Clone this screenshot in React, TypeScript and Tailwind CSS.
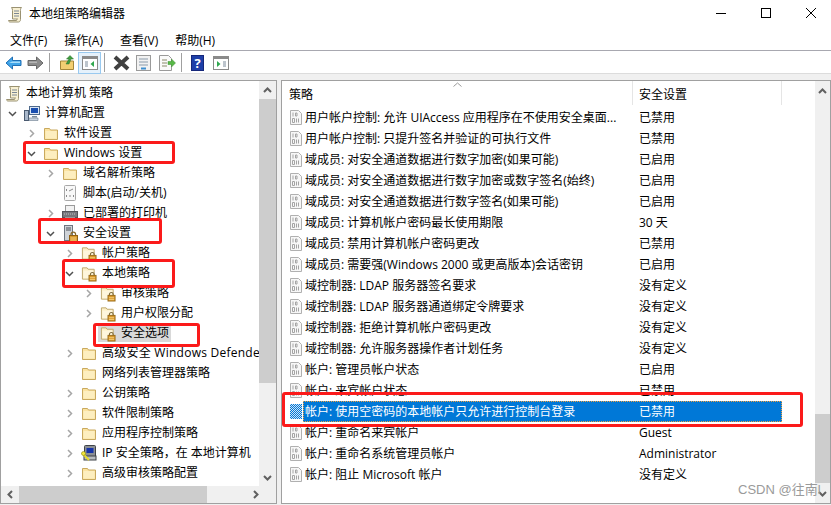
import React from "react";

type TreeIcon = "scroll" | "computer" | "folder" | "lockFolder" | "script" | "printer" | "safe" | "ip";

interface TreeItem {
  label: string;
  level: number;
  chevron?: "open" | "closed";
  icon: TreeIcon;
  selected?: boolean;
  wide?: boolean;
}

const treeItems: TreeItem[] = [
  { label: "本地计算机 策略", level: 0, icon: "scroll" },
  { label: "计算机配置", level: 1, chevron: "open", icon: "computer" },
  { label: "软件设置", level: 2, chevron: "closed", icon: "folder" },
  { label: "Windows 设置", level: 2, chevron: "open", icon: "folder" },
  { label: "域名解析策略", level: 3, chevron: "closed", icon: "folder" },
  { label: "脚本(启动/关机)", level: 3, icon: "script" },
  { label: "已部署的打印机", level: 3, chevron: "closed", icon: "printer" },
  { label: "安全设置", level: 3, chevron: "open", icon: "safe" },
  { label: "帐户策略", level: 4, chevron: "closed", icon: "lockFolder" },
  { label: "本地策略", level: 4, chevron: "open", icon: "lockFolder" },
  { label: "审核策略", level: 5, chevron: "closed", icon: "lockFolder" },
  { label: "用户权限分配", level: 5, chevron: "closed", icon: "lockFolder" },
  { label: "安全选项", level: 5, icon: "lockFolder", selected: true },
  { label: "高级安全 Windows Defende", level: 4, chevron: "closed", icon: "folder", wide: true },
  { label: "网络列表管理器策略", level: 4, icon: "folder" },
  { label: "公钥策略", level: 4, chevron: "closed", icon: "folder" },
  { label: "软件限制策略", level: 4, chevron: "closed", icon: "folder" },
  { label: "应用程序控制策略", level: 4, chevron: "closed", icon: "folder" },
  { label: "IP 安全策略，在 本地计算机", level: 4, chevron: "closed", icon: "ip" },
  { label: "高级审核策略配置", level: 4, chevron: "closed", icon: "folder" },
];

const policyRows: [string, string][] = [
  ["用户帐户控制: 允许 UIAccess 应用程序在不使用安全桌面...", "已禁用"],
  ["用户帐户控制: 只提升签名并验证的可执行文件", "已禁用"],
  ["域成员: 对安全通道数据进行数字加密(如果可能)", "已启用"],
  ["域成员: 对安全通道数据进行数字加密或数字签名(始终)", "已启用"],
  ["域成员: 对安全通道数据进行数字签名(如果可能)", "已启用"],
  ["域成员: 计算机帐户密码最长使用期限", "30 天"],
  ["域成员: 禁用计算机帐户密码更改", "已禁用"],
  ["域成员: 需要强(Windows 2000 或更高版本)会话密钥", "已启用"],
  ["域控制器: LDAP 服务器签名要求", "没有定义"],
  ["域控制器: LDAP 服务器通道绑定令牌要求", "没有定义"],
  ["域控制器: 拒绝计算机帐户密码更改", "没有定义"],
  ["域控制器: 允许服务器操作者计划任务", "没有定义"],
  ["帐户: 管理员帐户状态", "已启用"],
  ["帐户: 来宾帐户状态", "已禁用"],
  ["帐户: 使用空密码的本地帐户只允许进行控制台登录", "已禁用"],
  ["帐户: 重命名来宾帐户", "Guest"],
  ["帐户: 重命名系统管理员帐户", "Administrator"],
  ["帐户: 阻止 Microsoft 帐户", "没有定义"],
];

const Folder = () => (
  <svg width="16" height="15" viewBox="0 0 16 15">
    <path d="M1.500 13.500V2.500h5l1 1.500h7v9.500z" fill="#fbe3a1" stroke="#c9a95e" />
    <path d="M2.500 12.500V5h11v7.500z" fill="#fdeebf" />
  </svg>
);

const LockFolder = () => (
  <svg width="17" height="17" viewBox="0 0 17 17">
    <path d="M1.500 14.500V2.500h5l1 1.500h6.500v10.500z" fill="#fdf0c8" stroke="#bda56a" />
    <path d="M2.500 13.500V5.500h10.500v8z" fill="#fef6dc" />
    <path d="M10 11V9.500a2 2 0 0 1 4 0V11" fill="none" stroke="#7d6a3c" strokeWidth="1.200" />
    <rect x="8.500" y="10.500" width="7.500" height="6" fill="#d9992a" stroke="#9a6c1a" />
    <path d="M9.500 13h5.500M9.500 15h5.500" stroke="#f3cf7f" />
  </svg>
);

const Scroll = ({ size = 15 }: { size?: number }) => (
  <svg width={size} height={size + 2} viewBox="0 0 15 17">
    <path d="M3.500 1.500h10c-1 1-1 2-1 3v9c0 1.500-1 2.500-2 2.500H2c-1 0-1.500-.8-1.500-1.500h8c0-1 .5-1.500 1-1.500H4.500V4.500c0-1-.2-2-1-3z" fill="#f8f0d2" stroke="#9a9272" />
    <path d="M6 5h5M6 7.500h5M6 10h5" stroke="#7b8794" />
  </svg>
);

const Computer = () => (
  <svg width="16" height="16" viewBox="0 0 16 16">
    <rect x="5.500" y="1.500" width="10" height="8" fill="#dbe6f3" stroke="#4f6a8c" />
    <rect x="7" y="3" width="7" height="5" fill="#1a4fb0" />
    <path d="M8 11h5v1.500H8z" fill="#7a8a9c" />
    <rect x="0.500" y="5.500" width="4" height="10" fill="#a9b8cb" stroke="#4a5a70" />
    <path d="M5 13h9v2.500H5z" fill="#c9d3df" stroke="#6a7a8c" strokeWidth=".6" />
  </svg>
);

const ScriptIcon = () => (
  <svg width="14" height="16" viewBox="0 0 14 16">
    <rect x="1.500" y="0.500" width="11" height="15" rx="1" fill="#f8f8f8" stroke="#a8a8a8" />
    <path d="M4 4l-1 1 1 1M6 6l4-2M4 10l-1 1 1 1M10 10l1 1-1 1M6 11h2" stroke="#8a8a8a" fill="none" />
  </svg>
);

const Printer = () => (
  <svg width="16" height="16" viewBox="0 0 16 16">
    <rect x="3.500" y="0.500" width="9" height="6" fill="#f2f2f2" stroke="#9a9a9a" />
    <rect x="0.500" y="6.500" width="15" height="6" fill="#77777c" stroke="#55555a" />
    <path d="M2 9h12" stroke="#c4c4c4" strokeDasharray="1 1" />
    <rect x="3.500" y="12.500" width="9" height="3" fill="#e6e6e6" stroke="#9a9a9a" />
  </svg>
);

const SafeIcon = () => (
  <svg width="15" height="17" viewBox="0 0 15 17">
    <rect x="1.500" y="0.500" width="8" height="15" fill="#cfd3d8" stroke="#6e7680" />
    <path d="M3 3h5M3 5h5" stroke="#4a5058" />
    <path d="M8 11V9.500a2.300 2.300 0 0 1 4.600 0V11" fill="none" stroke="#8a6a2a" strokeWidth="1.200" />
    <rect x="6.500" y="10.500" width="8" height="6" fill="#d9992a" stroke="#8f6214" />
    <path d="M7.500 13h6M7.500 15h6" stroke="#f3cf7f" />
  </svg>
);

const IpIcon = () => (
  <svg width="16" height="17" viewBox="0 0 16 17">
    <rect x="3.500" y="0.500" width="11" height="13" rx="1" fill="#8b8f94" stroke="#3f4347" />
    <rect x="5.500" y="3" width="7" height="5" fill="#1533a8" />
    <rect x="3" y="11" width="12" height="4" fill="#b8bcc0" stroke="#3f4347" />
    <path d="M1 8l7 7" stroke="#e8dc2a" strokeWidth="2" />
    <circle cx="2.500" cy="8.500" r="2" fill="#f2e63a" stroke="#8c8412" strokeWidth=".6" />
  </svg>
);

const treeIcon = (icon: TreeIcon) => {
  switch (icon) {
    case "scroll":
      return <Scroll />;
    case "computer":
      return <Computer />;
    case "lockFolder":
      return <LockFolder />;
    case "script":
      return <ScriptIcon />;
    case "printer":
      return <Printer />;
    case "safe":
      return <SafeIcon />;
    case "ip":
      return <IpIcon />;
    default:
      return <Folder />;
  }
};

const Chevron = ({ dir }: { dir: "open" | "closed" }) => (
  <svg width="9" height="9" viewBox="0 0 9 9" fill="none">
    {dir === "open" ? (
      <path d="M1 3l3.500 3.500L8 3" stroke="#505050" strokeWidth="1.500" />
    ) : (
      <path d="M3 1l3.500 3.500L3 8" stroke="#a6a6a6" strokeWidth="1.500" />
    )}
  </svg>
);

// grey sheet with a folded corner and faint 1/0 marks
const PolicyIcon = ({ active }: { active?: boolean }) => (
  <svg width="14" height="15" viewBox="0 0 14 15" className="shrink-0">
    {active ? (
      <>
        <defs>
          <pattern id="chk" width="2" height="2" patternUnits="userSpaceOnUse">
            <rect width="2" height="2" fill="#cfe3f5" />
            <rect width="1" height="1" fill="#0078d7" />
            <rect x="1" y="1" width="1" height="1" fill="#0078d7" />
          </pattern>
        </defs>
        <rect x="1" y="0" width="12" height="15" fill="url(#chk)" />
      </>
    ) : (
      <>
        <path d="M1.500.500h8l3 3v11h-11z" fill="#f7f7f7" stroke="#b0b0b0" />
        <path d="M4 2.500v4M6.500 3h1.500v3H6.500zM3.500 8.500h2v4h-2zM7.500 8.500v4M9.500 8.500v4" fill="none" stroke="#a4a4a4" />
      </>
    )}
  </svg>
);

const Sep = () => <div className="w-px h-[19px] bg-[#a0a0a0]" />;

const ScrollArrow = ({ dir }: { dir: "up" | "down" | "left" | "right" }) => {
  const d = {
    up: "M1 6l3.500-3.500L8 6",
    down: "M1 3l3.500 3.500L8 3",
    left: "M6 1L2.500 4.500 6 8",
    right: "M3 1l3.500 3.500L3 8",
  }[dir];
  return (
    <svg width="9" height="9" viewBox="0 0 9 9" fill="none">
      <path d={d} stroke="#606060" strokeWidth="2" />
    </svg>
  );
};

const RedBox = ({ className }: { className: string }) => (
  <div className={`absolute border-[3px] border-[#fb1a1a] rounded-[3px] pointer-events-none ${className}`} />
);

export default function App() {
  return (
    <div
      className="relative w-[831px] h-[505px] bg-white text-[12px] text-black overflow-hidden flex flex-col"
      style={{ fontFamily: '"Open Sans", "Noto Sans CJK SC", sans-serif' }}
    >
      {/* title bar */}
      <div className="h-[26px] flex items-center shrink-0 pl-[8px] pt-[2px]">
        <Scroll />
        <span className="ml-[6px]">本地组策略编辑器</span>
        <div className="ml-auto flex items-center mr-[15px] gap-[35px] -mt-[2px]">
          <div className="w-[10px] h-px bg-black" />
          <div className="w-[10px] h-[10px] border border-black" />
          <svg width="10" height="10" viewBox="0 0 10 10">
            <path d="M0 0l10 10M10 0L0 10" stroke="#000" strokeWidth="1" />
          </svg>
        </div>
      </div>

      {/* menu */}
      <div className="h-[25px] flex items-center shrink-0 pl-[10px] gap-[17px] border-b border-[#a8a8b0] pt-[5px]">
        <span>文件(F)</span>
        <span>操作(A)</span>
        <span>查看(V)</span>
        <span>帮助(H)</span>
      </div>

      {/* toolbar */}
      <div className="h-[23px] flex items-center shrink-0 pl-[5px] border-b border-[#dcdcdc] pt-[1px]">
        <svg width="17" height="14" viewBox="0 0 17 14">
          <path d="M7.500 1L1 7l6.500 6V9.500h8.500v-5H7.500z" fill="#3fa4e8" stroke="#1f6fb5" />
          <path d="M7 5.500h8V7H4z" fill="#a6dcfa" />
        </svg>
        <svg className="ml-[5px]" width="17" height="14" viewBox="0 0 17 14">
          <path d="M9.500 1L16 7l-6.500 6V9.500H1v-5h8.500z" fill="#8c8c8c" stroke="#666666" />
          <path d="M2 5.500h8V7H2z" fill="#b5b5b5" />
        </svg>
        <div className="ml-[5px]"><Sep /></div>
        <svg className="ml-[9px]" width="16" height="16" viewBox="0 0 16 16">
          <path d="M1.500 14.500V6h13v8.500z" fill="#f3cf72" stroke="#a5873a" />
          <path d="M7 9l3-5H7.500L11 .500 14.500 4H12l-2 5z" fill="#3f9e3f" stroke="#2a6f2a" strokeWidth=".5" />
        </svg>
        <div className="ml-[3px] w-[23px] h-[22px] bg-[#e5f1fb] border border-[#99c9ef] flex items-center justify-center">
          <svg width="16" height="14" viewBox="0 0 16 14">
            <rect x="0.500" y="0.500" width="15" height="13" fill="#fff" stroke="#8a8a8a" />
            <rect x="1" y="1" width="14" height="2" fill="#8a8a8a" />
            <path d="M3 6h3M3 8h3M3 10h3" stroke="#7a8a9a" />
            <path d="M12 5v6L8.500 8z" fill="#2fa84f" />
          </svg>
        </div>
        <div className="ml-[3px]"><Sep /></div>
        <svg className="ml-[8px]" width="17" height="16" viewBox="0 0 17 16">
          <path d="M2 2l13 12M15 2L2 14" stroke="#404040" strokeWidth="4" />
        </svg>
        <svg className="ml-[6px]" width="15" height="16" viewBox="0 0 15 16">
          <rect x="0.500" y="0.500" width="14" height="15" fill="#f2f2f2" stroke="#9a9a9a" />
          <path d="M3 4h9M3 7h9M3 10h9" stroke="#8a9aaa" />
          <rect x="5" y="12.500" width="5" height="2" fill="#3f8fd0" />
        </svg>
        <svg className="ml-[8px]" width="17" height="16" viewBox="0 0 17 16">
          <path d="M.500.500h9l3 3v12H.500z" fill="#fafafa" stroke="#9a9a9a" />
          <path d="M3 5h5M3 8h5M3 11h5" stroke="#8a8a6a" />
          <path d="M9 6.500h3.500V4l4 4-4 4V9.500H9z" fill="#58b947" stroke="#3d8f30" strokeWidth=".5" />
        </svg>
        <div className="ml-[5px]"><Sep /></div>
        <div className="ml-[9px] w-[13px] h-[16px] bg-[#1e3fa8] border border-[#15277a] text-white text-[13px] font-bold leading-[15px] text-center">?</div>
        <svg className="ml-[9px]" width="16" height="14" viewBox="0 0 16 14">
          <rect x="0.500" y="0.500" width="15" height="13" fill="#fff" stroke="#8a8a8a" />
          <rect x="1" y="1" width="14" height="2" fill="#8a8a8a" />
          <path d="M10 6h3M10 8h3M10 10h3" stroke="#7a8a9a" />
          <path d="M4 5v6l3.500-3z" fill="#2fa84f" />
        </svg>
      </div>

      {/* panes */}
      <div className="flex-1 min-h-0 bg-[#f0f0f0] pt-[6px] flex gap-[4px] pb-[1px]">
        {/* tree */}
        <div className="w-[277px] border border-[#a0a0a0] bg-white flex flex-col min-h-0">
          <div className="flex-1 flex min-h-0">
            <div className="flex-1 min-w-0 overflow-hidden pt-[2px]">
              {treeItems.map((item) => (
                <div
                  key={item.label}
                  className="h-[20px] flex items-center whitespace-nowrap"
                  style={{ paddingLeft: item.level === 0 ? 4 : 4 + (item.level - 1) * 19 }}
                >
                  {item.level > 0 && (
                    <div className="w-[19px] shrink-0 flex items-center pl-[3px]">
                      {item.chevron && <Chevron dir={item.chevron} />}
                    </div>
                  )}
                  <div
                    className={`flex items-center ${
                      item.selected ? "bg-[#d9d9d9] h-[18px] -ml-[2px] px-[2px]" : ""
                    }`}
                  >
                    <div className="w-[16px] shrink-0 flex justify-center">{treeIcon(item.icon)}</div>
                    <span className={`ml-[5px] ${item.wide ? "tracking-[0.25px]" : ""}`}>{item.label}</span>
                  </div>
                </div>
              ))}
            </div>
            <div className="w-[17px] shrink-0 bg-[#f0f0f0] flex flex-col items-center">
              <div className="h-[18px] flex items-center justify-center"><ScrollArrow dir="up" /></div>
              <div className="w-full h-[284px] bg-[#cdcdcd]" />
              <div className="mt-auto h-[17px] flex items-center justify-center"><ScrollArrow dir="down" /></div>
            </div>
          </div>
          <div className="h-[17px] shrink-0 bg-[#f0f0f0] flex items-center">
            <div className="w-[18px] flex justify-center"><ScrollArrow dir="left" /></div>
            <div className="w-[188px] h-full bg-[#cdcdcd]" />
            <div className="ml-auto w-[42px] flex justify-center"><ScrollArrow dir="right" /></div>
          </div>
        </div>

        {/* policy list */}
        <div className="flex-1 min-w-0 border border-[#a0a0a0] bg-white flex">
          <div className="flex-1 min-w-0 relative">
            <div className="h-[26px] flex items-start relative">
              <div className="w-[351px] pl-[7px] shrink-0 border-r border-[#e5e5e5] h-[24px] pt-[3px] flex items-center">策略</div>
              <div className="w-[149px] pl-[6px] shrink-0 border-r border-[#e5e5e5] h-[24px] pt-[3px] flex items-center">安全设置</div>
              <svg className="absolute left-[171px] top-[1px]" width="9" height="5" viewBox="0 0 9 5" fill="none">
                <path d="M.5 4.500l4-3.500 4 3.500" stroke="#9a9a9a" />
              </svg>
            </div>
            <div>
              {policyRows.map(([name, value], i) => {
                const active = i === 14;
                return (
                  <div key={name} className="h-[21px] flex items-center whitespace-nowrap pl-[7px]">
                    <PolicyIcon active={active} />
                    <div
                      className={`h-full flex items-center w-[479px] shrink-0 ${
                        active ? "bg-[#0078d7] text-white outline-1 outline-dotted outline-offset-[-1px] outline-[#f0a040]" : ""
                      }`}
                    >
                      <span className="w-[336px] shrink-0 pl-[2px] overflow-hidden">{name}</span>
                      <span>{value}</span>
                    </div>
                  </div>
                );
              })}
            </div>
          </div>
          <div className="w-[15px] shrink-0 bg-[#f0f0f0] flex flex-col items-center">
            <div className="h-[21px] flex items-center justify-center"><ScrollArrow dir="up" /></div>
            <div className="w-full h-[71px] bg-[#cdcdcd] mt-[312px]" />
            <div className="mt-auto h-[20px] flex items-center justify-center"><ScrollArrow dir="down" /></div>
          </div>
        </div>
      </div>

      {/* annotations */}
      <RedBox className="left-[23px] top-[141px] w-[152px] h-[23px]" />
      <RedBox className="left-[38px] top-[218px] w-[124px] h-[26px]" />
      <RedBox className="left-[62px] top-[259px] w-[113px] h-[29px]" />
      <RedBox className="left-[93px] top-[323px] w-[107px] h-[24px]" />
      <RedBox className="left-[282px] top-[392px] w-[521px] h-[35px]" />
      <span
        className="absolute left-[738px] top-[481px] whitespace-nowrap text-[13px] leading-[18px] text-[#9a9a9a]"
        style={{ fontFamily: '"Liberation Sans", "Noto Sans CJK SC", sans-serif' }}
      >
        CSDN @往南l
      </span>
    </div>
  );
}
